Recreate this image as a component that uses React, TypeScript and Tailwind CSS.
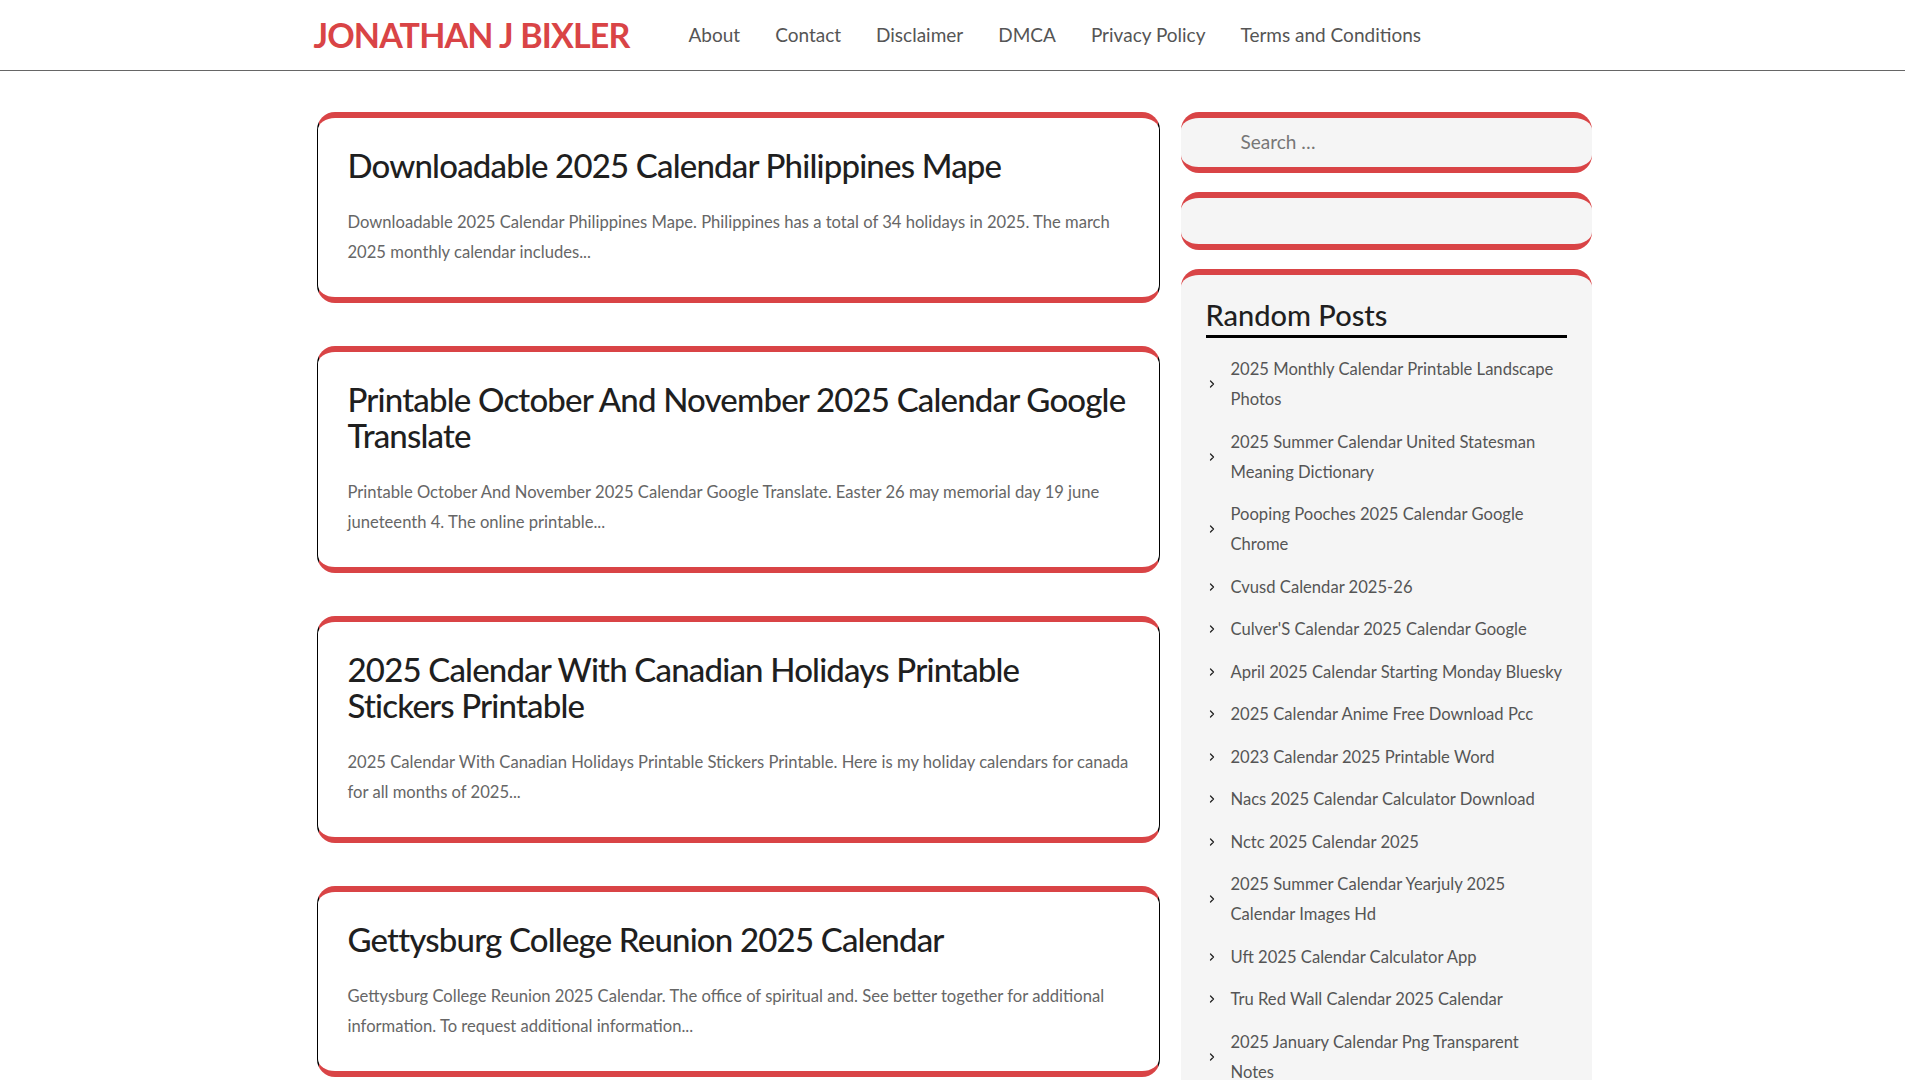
import { ChevronRight } from 'lucide-react';

const nav = ['About', 'Contact', 'Disclaimer', 'DMCA', 'Privacy Policy', 'Terms and Conditions'];

const posts = [
  {
    title: 'Downloadable 2025 Calendar Philippines Mape',
    text: 'Downloadable 2025 Calendar Philippines Mape. Philippines has a total of 34 holidays in 2025. The march 2025 monthly calendar includes...',
  },
  {
    title: 'Printable October And November 2025 Calendar Google Translate',
    text: 'Printable October And November 2025 Calendar Google Translate. Easter 26 may memorial day 19 june juneteenth 4. The online printable...',
  },
  {
    title: '2025 Calendar With Canadian Holidays Printable Stickers Printable',
    text: '2025 Calendar With Canadian Holidays Printable Stickers Printable. Here is my holiday calendars for canada for all months of 2025...',
  },
  {
    title: 'Gettysburg College Reunion 2025 Calendar',
    text: 'Gettysburg College Reunion 2025 Calendar. The office of spiritual and. See better together for additional information. To request additional information...',
  },
];

const random = [
  '2025 Monthly Calendar Printable Landscape Photos',
  '2025 Summer Calendar United Statesman Meaning Dictionary',
  'Pooping Pooches 2025 Calendar Google Chrome',
  'Cvusd Calendar 2025-26',
  "Culver'S Calendar 2025 Calendar Google",
  'April 2025 Calendar Starting Monday Bluesky',
  '2025 Calendar Anime Free Download Pcc',
  '2023 Calendar 2025 Printable Word',
  'Nacs 2025 Calendar Calculator Download',
  'Nctc 2025 Calendar 2025',
  '2025 Summer Calendar Yearjuly 2025 Calendar Images Hd',
  'Uft 2025 Calendar Calculator App',
  'Tru Red Wall Calendar 2025 Calendar',
  '2025 January Calendar Png Transparent Notes',
  'Printable October And November 2025 Calendar Google Scholar',
  'Jcps 2025 Calendar Pdf',
];

export default function App() {
  return (
    <div className="w-[1905px] min-h-[1400px] bg-white text-[#222]" style={{ fontFamily: 'Lato, "Open Sans", sans-serif' }}>
      <header className="border-b border-[#666] h-[71px]">
        <div className="w-[1278px] mx-auto h-full flex items-center">
          <a className="text-[34px] font-bold text-[#d94446] tracking-tight uppercase leading-none w-[375px]">Jonathan J Bixler</a>
          <nav className="flex items-center gap-[35px] text-[19px] text-[#555]">
            {nav.map((n) => (
              <a key={n}>{n}</a>
            ))}
          </nav>
        </div>
      </header>

      <div className="w-[1278px] mx-auto pt-[41px] flex gap-[21px] pl-[3px]">
        <main className="w-[843px] flex flex-col gap-[43px]">
          {posts.map((p) => (
            <article
              key={p.title}
              className="rounded-[18px] border-x border-black border-y-[6px] border-y-[#d94446] px-[30px] pt-[29px] pb-[30px] bg-white"
            >
              <h2 className="text-[33px] font-medium leading-[36px] text-[#1f1f1f] tracking-tight">{p.title}</h2>
              <p className="mt-[24px] text-[16.6px] leading-[30px] text-[#666]">{p.text}</p>
            </article>
          ))}
        </main>

        <aside className="w-[411px] flex flex-col gap-[19px]">
          <div className="rounded-[18px] bg-[#f5f5f5] border-y-[6px] border-[#d94446] h-[61px] flex items-center pl-[60px] text-[19px] text-[#777]">
            Search …
          </div>
          <div className="rounded-[18px] bg-[#f5f5f5] border-y-[6px] border-[#d94446] h-[58px]" />
          <div className="rounded-t-[18px] bg-[#f5f5f5] border-t-[6px] border-[#d94446] px-[25px] pt-[22px] pb-[30px]">
            <h3 className="text-[29px] font-medium text-[#1f1f1f] leading-[36px] pb-[2px] border-b-[3px] border-black">Random Posts</h3>
            <ul className="mt-[16px] flex flex-col gap-[12.5px]">
              {random.map((r) => (
                <li key={r} className="flex items-center text-[16.6px] leading-[30px] text-[#555]">
                  <ChevronRight size={12} strokeWidth={2.5} className="shrink-0 text-[#222] mr-[13px]" />
                  <span>{r}</span>
                </li>
              ))}
            </ul>
          </div>
        </aside>
      </div>
    </div>
  );
}
